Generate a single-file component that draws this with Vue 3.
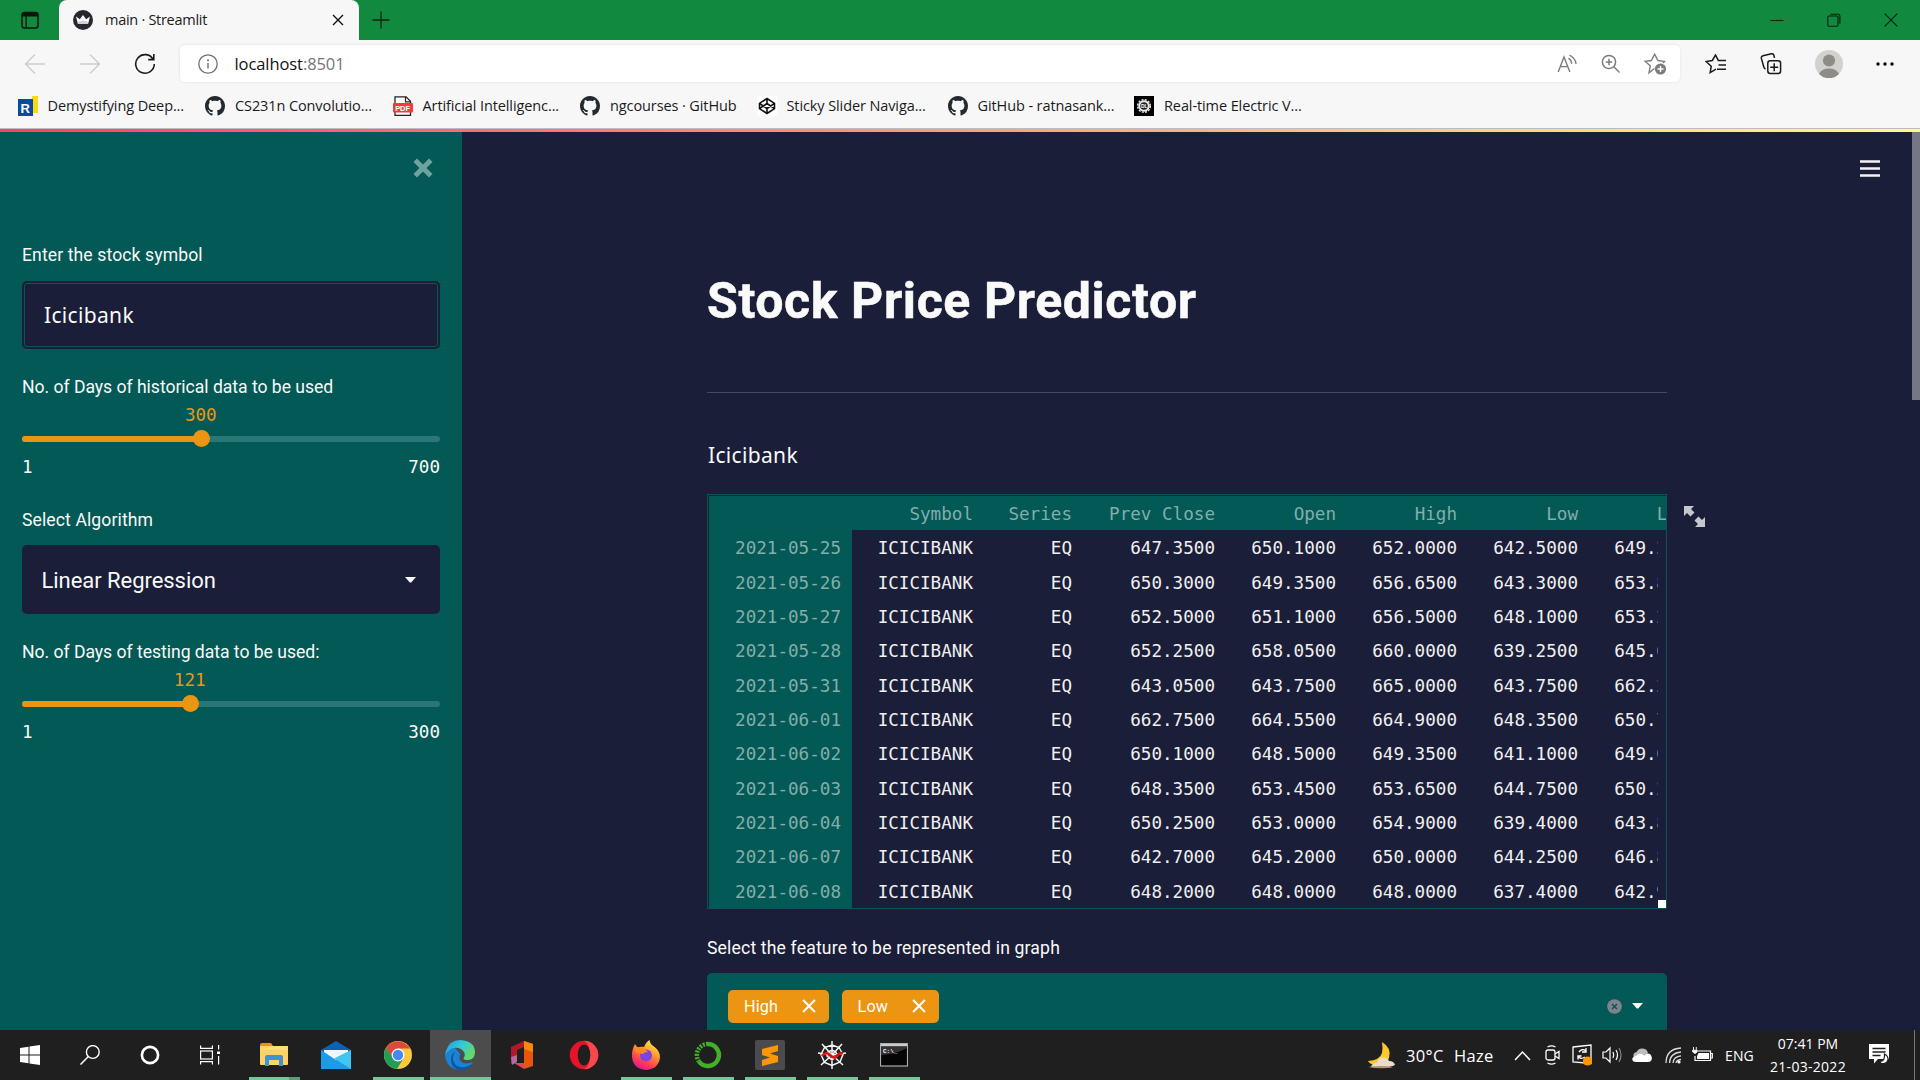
<script setup>
const bookmarks = [
  { icon: 'repo', label: 'Demystifying Deep...' },
  { icon: 'github', label: 'CS231n Convolutio...' },
  { icon: 'pdf', label: 'Artificial Intelligenc...' },
  { icon: 'github', label: 'ngcourses · GitHub', narrow: true },
  { icon: 'codepen', label: 'Sticky Slider Naviga...', wide: true },
  { icon: 'github', label: 'GitHub - ratnasank...' },
  { icon: 'dl', label: 'Real-time Electric V...' },
]

const columns = ['', 'Symbol', 'Series', 'Prev Close', 'Open', 'High', 'Low', 'Last']
const rows = [
  ['2021-05-25', 'ICICIBANK', 'EQ', '647.3500', '650.1000', '652.0000', '642.5000', '649.2000'],
  ['2021-05-26', 'ICICIBANK', 'EQ', '650.3000', '649.3500', '656.6500', '643.3000', '653.8000'],
  ['2021-05-27', 'ICICIBANK', 'EQ', '652.5000', '651.1000', '656.5000', '648.1000', '653.2000'],
  ['2021-05-28', 'ICICIBANK', 'EQ', '652.2500', '658.0500', '660.0000', '639.2500', '645.6000'],
  ['2021-05-31', 'ICICIBANK', 'EQ', '643.0500', '643.7500', '665.0000', '643.7500', '662.2000'],
  ['2021-06-01', 'ICICIBANK', 'EQ', '662.7500', '664.5500', '664.9000', '648.3500', '650.7000'],
  ['2021-06-02', 'ICICIBANK', 'EQ', '650.1000', '648.5000', '649.3500', '641.1000', '649.0000'],
  ['2021-06-03', 'ICICIBANK', 'EQ', '648.3500', '653.4500', '653.6500', '644.7500', '650.2000'],
  ['2021-06-04', 'ICICIBANK', 'EQ', '650.2500', '653.0000', '654.9000', '639.4000', '643.8000'],
  ['2021-06-07', 'ICICIBANK', 'EQ', '642.7000', '645.2000', '650.0000', '644.2500', '646.8000'],
  ['2021-06-08', 'ICICIBANK', 'EQ', '648.2000', '648.0000', '648.0000', '637.4000', '642.9000'],
]

const history = { value: 300, min: 1, max: 700 }
const testing = { value: 121, min: 1, max: 300 }
const pct = (s) => ((s.value - s.min) / (s.max - s.min)) * 100 + '%'

const apps = [
  { id: 'explorer', open: true, stacked: true },
  { id: 'mail' },
  { id: 'chrome', open: true },
  { id: 'edge', open: true, active: true },
  { id: 'office' },
  { id: 'opera' },
  { id: 'firefox', open: true },
  { id: 'anaconda', open: true },
  { id: 'sublime', open: true },
  { id: 'spyder', open: true },
  { id: 'cmd', open: true },
]
</script>

<template>
  <div class="screen">
    <!-- browser tabs -->
    <header class="tabbar">
      <div class="tab-menu">
        <svg width="20" height="20" viewBox="0 0 20 20"><rect x="2" y="2.5" width="16" height="15.5" rx="2.5" fill="none" stroke="#07170d" stroke-width="1.5" /><path d="M2 6V4.500Q2 2.500 4.500 2.500H15.500Q18 2.500 18 4.500V6.500H2zM5.500 6h1.300v12H5.500z" fill="#07170d" /></svg>
      </div>
      <div class="tab">
        <svg class="fav" width="20" height="20" viewBox="0 0 20 20"><circle cx="10" cy="10" r="10" fill="#262730" /><path d="M3 6.500l3.800 2.800L10 5l3.200 4.300L17 6.500l-2 7.500H5z" fill="#fff" /><path d="M4.600 12l5.400-1.500 5.400 1.500-.5 2H5z" fill="#cfd0d6" /></svg>
        <span class="tab-title">main · Streamlit</span>
        <svg width="12" height="12" viewBox="0 0 12 12"><path d="M1 1l10 10M11 1L1 11" stroke="#111" stroke-width="1.400" /></svg>
      </div>
      <svg class="plus" width="18" height="18" viewBox="0 0 18 18"><path d="M9 .5v17M.5 9h17" stroke="#06250f" stroke-width="1.300" /></svg>
      <div class="win">
        <svg width="14" height="14" viewBox="0 0 14 14"><path d="M.5 7.500h13" stroke="#04200d" stroke-width="1.100" /></svg>
        <svg width="14" height="14" viewBox="0 0 14 14" fill="none" stroke="#04200d" stroke-width="1.100"><rect x=".8" y="3" width="10.200" height="10.200" rx="1.200" /><path d="M3.500 1.200H11Q12.900 1.200 12.900 3v7.500" /></svg>
        <svg width="14" height="14" viewBox="0 0 14 14"><path d="M.7.7l12.600 12.600M13.300.7L.7 13.300" stroke="#04200d" stroke-width="1.100" /></svg>
      </div>
    </header>

    <!-- toolbar -->
    <div class="toolbar">
      <svg class="nav" width="22" height="22" viewBox="0 0 22 22" fill="none" stroke="#cdcdcd" stroke-width="1.400"><path d="M21 11H1.500M11 1.500L1.500 11l9.500 9.500" /></svg>
      <svg class="nav" width="22" height="22" viewBox="0 0 22 22" fill="none" stroke="#cdcdcd" stroke-width="1.400"><path d="M1 11h19.500M11 1.500l9.500 9.500-9.500 9.500" /></svg>
      <svg class="nav" width="22" height="22" viewBox="0 0 22 22" fill="none" stroke="#1b1b1b" stroke-width="1.600"><path d="M19.200 6.500A9.300 9.300 0 1 0 20.300 11M19.800 1v5.600h-5.600" /></svg>
      <div class="address">
        <svg width="20" height="20" viewBox="0 0 20 20"><circle cx="10" cy="10" r="9.200" fill="none" stroke="#707070" stroke-width="1.300" /><path d="M10 9v5.500" stroke="#707070" stroke-width="1.400" /><circle cx="10" cy="6.300" r="1" fill="#707070" /></svg>
        <span class="url">localhost<i>:8501</i></span>
        <svg class="tool" width="21" height="20" viewBox="0 0 21 20" fill="none" stroke="#7c7c7c" stroke-width="1.400"><path d="M1.200 18L7 3l5.900 15M3.300 12.600h7.600M11.500 4.200q3 2 3.200 5.600M12.500 1.200q5.600 2.800 6.600 8.600" /></svg>
        <svg class="tool" width="20" height="20" viewBox="0 0 20 20" fill="none" stroke="#7c7c7c" stroke-width="1.500"><circle cx="8" cy="8" r="6.600" /><path d="M12.800 12.800l5.700 5.700M8 4.800v6.400M4.800 8h6.400" /></svg>
        <svg class="tool" width="23" height="22" viewBox="0 0 23 22" fill="none" stroke="#7c7c7c" stroke-width="1.400"><path d="M10.500 15.500L5 19.800l1.200-7L1 8.300l6.300-.8L10.700 1.200l3.200 6.300 6.600.9-1.500 1.600" /><circle cx="16.500" cy="16" r="5.600" fill="#7c7c7c" stroke="none" /><path d="M16.500 13v6M13.500 16h6" stroke="#fff" /></svg>
      </div>
      <svg class="fav-list" width="22" height="20" viewBox="0 0 22 20" fill="none" stroke="#1b1b1b" stroke-width="1.500"><path d="M11 15.200L5.200 18.600l1-6.400L1 7.500l6.300-1L10.500 1l2.800 5.400H21M13.500 11H21M12 15.200h9" /></svg>
      <svg class="collections" width="22" height="22" viewBox="0 0 22 22" fill="none" stroke="#1b1b1b" stroke-width="1.500"><rect x="7.800" y="7.800" width="12.800" height="12.800" rx="2.500" /><path d="M14.200 10.200v8M10.200 14.200h8M5.500 16Q4.200 15.500 3.800 14L1.300 5.200Q1 3.300 3 2.700l8.500-2Q13.300.6 13.800 2l.7 3" /></svg>
      <svg class="avatar" width="28" height="28" viewBox="0 0 28 28"><circle cx="14" cy="14" r="14" fill="#d3d1ce" /><circle cx="14" cy="10.500" r="6.100" fill="#8f8c88" /><path d="M4 24a10.500 8 0 0 1 20 0 14 14 0 0 1-20 0z" fill="#8f8c88" /></svg>
      <svg class="dots" width="18" height="4" viewBox="0 0 18 4"><circle cx="2" cy="2" r="1.700" /><circle cx="9" cy="2" r="1.700" /><circle cx="16" cy="2" r="1.700" /></svg>
    </div>

    <!-- bookmarks -->
    <div class="bookmarks">
      <div v-for="b in bookmarks" :key="b.label" class="bookmark" :class="{ narrow: b.narrow, wide: b.wide }">
        <svg v-if="b.icon === 'repo'" width="20" height="20" viewBox="0 0 20 20"><path d="M14 0h6v17h-6z" fill="#f7da16" /><path d="M0 3h15v17H0z" fill="#0a4a9e" /><text x="2.500" y="16.500" class="r-letter">R</text></svg>
        <svg v-else-if="b.icon === 'github'" width="20" height="20" viewBox="0 0 16 16"><path fill="#24292f" d="M8 0C3.580 0 0 3.580 0 8c0 3.540 2.290 6.530 5.470 7.590.4.070.55-.17.55-.38 0-.19-.01-.82-.01-1.490-2.010.37-2.530-.49-2.690-.94-.09-.23-.48-.94-.82-1.130-.28-.15-.68-.52-.01-.53.63-.01 1.080.58 1.230.82.72 1.210 1.870.87 2.330.66.070-.52.28-.87.51-1.070-1.780-.2-3.640-.89-3.640-3.950 0-.87.31-1.590.82-2.150-.08-.2-.36-1.020.08-2.120 0 0 .67-.21 2.200.82.64-.18 1.320-.27 2-.27.68 0 1.360.09 2 .27 1.530-1.040 2.200-.82 2.200-.82.44 1.100.16 1.920.08 2.120.51.56.82 1.270.82 2.150 0 3.070-1.870 3.750-3.650 3.950.29.25.54.73.54 1.480 0 1.070-.01 1.930-.01 2.200 0 .21.15.46.55.38A8.013 8.013 0 0 0 16 8c0-4.420-3.580-8-8-8z" /></svg>
        <svg v-else-if="b.icon === 'pdf'" width="20" height="20" viewBox="0 0 20 20"><path d="M2 .8h11l4.500 4.500v14H2z" fill="#fff" stroke="#222" stroke-width="1.300" /><path d="M12.500 1v4.800h5" fill="none" stroke="#222" stroke-width="1.200" /><rect x="0" y="7" width="20" height="9.500" rx="1" fill="#f23c3c" /><text x="2.200" y="14.600" class="pdf-letter">PDF</text></svg>
        <svg v-else-if="b.icon === 'codepen'" width="20" height="20" viewBox="0 0 20 20"><rect width="20" height="20" rx="2" fill="#fff" /><path d="M10 2.500l7.500 4.800v5.400L10 17.500l-7.500-4.800V7.300zM10 2.500v5M10 12.500v5M2.500 7.300L10 12.500l7.500-5.200M2.500 12.700L10 7.500l7.500 5.200" fill="none" stroke="#111" stroke-width="1.600" stroke-linejoin="round" /></svg>
        <svg v-else width="20" height="20" viewBox="0 0 20 20"><rect width="20" height="20" fill="#000" /><circle cx="10" cy="10" r="5.800" fill="#e8e8e8" /><circle cx="10" cy="10" r="6.300" fill="none" stroke="#e8e8e8" stroke-width="1.500" stroke-dasharray="2 1.300" /><circle cx="10" cy="10" r="3.800" fill="#222" /><text x="7" y="11.800" class="dl-letter">DL</text></svg>
        <span>{{ b.label }}</span>
      </div>
    </div>
    <div class="decoration"></div>

    <!-- page -->
    <div class="page">
      <aside class="sidebar">
        <svg class="close" width="20" height="20" viewBox="0 0 20 20"><path d="M2.200 2.200l15.600 15.600M17.800 2.200L2.200 17.800" stroke="#6ea29f" stroke-width="5" /></svg>
        <label class="lbl">Enter the stock symbol</label>
        <div class="input"><div class="input-in"><span class="big serif-i">Icicibank</span></div></div>
        <label class="lbl days">No. of Days of historical data to be used</label>
        <div class="slider">
          <div class="value"><span :style="{ left: pct(history) }">{{ history.value }}</span></div>
          <div class="track"><div class="fill" :style="{ width: pct(history) }"></div></div>
          <div class="ticks"><span>{{ history.min }}</span><span>{{ history.max }}</span></div>
        </div>
        <label class="lbl algo">Select Algorithm</label>
        <div class="select"><span class="big regression">Linear Regression</span>
          <svg width="11" height="6" viewBox="0 0 11 6"><path d="M0 0h11L6.200 5.500H4.800z" fill="#fafafa" /></svg>
        </div>
        <label class="lbl days">No. of Days of testing data to be used:</label>
        <div class="slider">
          <div class="value"><span :style="{ left: pct(testing) }">{{ testing.value }}</span></div>
          <div class="track"><div class="fill" :style="{ width: pct(testing) }"></div></div>
          <div class="ticks"><span>{{ testing.min }}</span><span>{{ testing.max }}</span></div>
        </div>
      </aside>

      <main class="main">
        <svg class="burger" width="20" height="18" viewBox="0 0 20 18"><path d="M0 1.500h20M0 8.500h20M0 15.500h20" stroke="#f2f2f4" stroke-width="2.600" /></svg>
        <div class="scroll-thumb"></div>
        <section class="content">
          <h1>Stock Price Predictor</h1>
          <hr />
          <p class="name big serif-i">Icicibank</p>
          <div class="frame">
            <div class="grid">
              <div class="row head"><span v-for="(c, i) in columns" :key="i" :class="'c' + i">{{ c }}</span></div>
              <div v-for="r in rows" :key="r[0]" class="row"><span v-for="(c, i) in r" :key="i" :class="'c' + i">{{ c }}</span></div>
              <i class="gutter"></i><i class="corner"></i>
            </div>
            <svg class="expand" width="21" height="21" viewBox="0 0 21 21" fill="#c6c6cd"><path d="M0 0h10L7 3l3.500 3.500-4 4L3 7l-3 3zM21 21H11l3-3-3.500-3.500 4-4L18 14l3-3z" /></svg>
          </div>
          <label class="lbl feature">Select the feature to be represented in graph</label>
          <div class="multi">
            <span v-for="t in ['High', 'Low']" :key="t" class="tag">{{ t }}
              <svg width="14" height="14" viewBox="0 0 13 13"><path d="M1 1l11 11M12 1L1 12" stroke="#fff" stroke-width="1.900" /></svg>
            </span>
            <svg class="clear" width="15" height="15" viewBox="0 0 15 15"><circle cx="7.500" cy="7.500" r="7.300" fill="#80838f" /><path d="M5 5l5 5M10 5l-5 5" stroke="#025955" stroke-width="1.500" /></svg>
            <svg width="11" height="6" viewBox="0 0 11 6"><path d="M0 0h11L6.200 5.500H4.800z" fill="#fafafa" /></svg>
          </div>
        </section>
      </main>
    </div>

    <!-- taskbar -->
    <footer class="taskbar">
      <div class="sys"><svg width="20" height="20" viewBox="0 0 20 20" fill="#fff"><path d="M0 3l8.500-1.300v7.800H0zM9.500 1.500L20 0v9.500H9.500zM0 10.500h8.500v7.800L0 17zM9.500 10.500H20V20L9.500 18.500z" /></svg></div>
      <div class="sys"><svg width="20" height="20" viewBox="0 0 20 20" fill="none" stroke="#fff" stroke-width="1.400"><circle cx="12.800" cy="7" r="6.400" /><path d="M8.300 11.600L.5 19.600" /></svg></div>
      <div class="sys"><svg width="20" height="20" viewBox="0 0 20 20"><circle cx="10" cy="10" r="8.100" fill="none" stroke="#fff" stroke-width="2.600" /></svg></div>
      <div class="sys"><svg width="20" height="20" viewBox="0 0 20 20" fill="none" stroke="#fff" stroke-width="1.200"><path d="M.6.500v2.800h11.800V.5M.6 19.500v-2.800h11.800v2.800M18.600 0v4.500M18.600 11v8.500" /><rect x=".6" y="6" width="11.800" height="8" /><path d="M17 6.500h3V9h-3z" fill="#fff" stroke="none" /></svg></div>

      <div v-for="a in apps" :key="a.id" class="app" :class="{ open: a.open, active: a.active, stacked: a.stacked }">
        <svg v-if="a.id === 'explorer'" width="30" height="30" viewBox="0 0 30 30"><path d="M1 5q0-2 2-2h9l2 3v3H1z" fill="#dd9a0b" /><rect x="1" y="6" width="28" height="19" rx="1" fill="#fdd367" /><path d="M1 10L14 6h15v4H1z" fill="#ffdc7b" /><path d="M6 26V17q0-2 2-2h14q2 0 2 2v9h-4v-6H10v6z" fill="#3f92d4" /></svg>
        <svg v-else-if="a.id === 'mail'" width="30" height="30" viewBox="0 0 30 30"><path d="M0 10L15 1l15 9v3H0z" fill="#0a62b5" /><path d="M3 10h24v10H3z" fill="#f5f5f7" /><path d="M0 10l15 10L30 10v19H0z" fill="#1c9be6" /><path d="M30 10v19L13 18.500z" fill="#41c6f4" /></svg>
        <svg v-else-if="a.id === 'chrome'" width="28" height="28" viewBox="0 0 28 28"><circle cx="14" cy="14" r="14" fill="#fcc93e" /><path d="M1.900 7A14 14 0 0 1 26.100 7.600L14 7.600 8.500 17z" fill="#dc4a3d" /><path d="M1.900 7A14 14 0 0 0 13 28l6-10-10-1z" fill="#1f9e58" /><circle cx="14" cy="14" r="6.400" fill="#fff" /><circle cx="14" cy="14" r="5.200" fill="#4688f4" /></svg>
        <svg v-else-if="a.id === 'edge'" width="30" height="30" viewBox="0 0 30 30">
          <defs><linearGradient id="eg" x1="0" x2="1" y1="0" y2=".5"><stop offset="0" stop-color="#1b9de2" /><stop offset=".55" stop-color="#35c9d6" /><stop offset="1" stop-color="#62da6c" /></linearGradient></defs>
          <path d="M1 10A15 15 0 0 0 9 28.700Q20 32 27.500 23.500 28 22 26 22.500 20 25 16 21.500 13 18 15.500 14L10 8z" fill="#1a83d4" />
          <path d="M1 11Q4 0 15.500 0 30 1 30 12.500q-.5 7.500-7 7.500-5 0-4.500-2 2.300-2.500.5-6Q15 7 9 8 3 9.500.5 15z" fill="url(#eg)" />
          <path d="M10 12Q5 20 12 26q7 3.500 15.500-2.500-5 7.500-13 6.500Q6 28 6 20q0-6 4-8z" fill="#0c57a5" />
        </svg>
        <svg v-else-if="a.id === 'office'" width="24" height="30" viewBox="0 0 24 30"><path d="M1 7L14 1v6l-7 3v12l-6 2z" fill="#b3172a" /><path d="M1 17l6-2v7l-5 3z" fill="#b06aa6" /><path d="M14 1l9 3v22l-9 3z" fill="#e8560b" /><path d="M14 1l9 3v8l-9-3z" fill="#f58a0a" /><path d="M4 23h10v6z" fill="#e8405c" /></svg>
        <svg v-else-if="a.id === 'opera'" width="30" height="30" viewBox="0 0 30 30"><circle cx="15" cy="15" r="14.300" fill="#e4142b" /><path d="M15 .7a14.300 14.300 0 0 1 0 28.600q6-3 6-14.300T15 .7z" fill="#f9474c" /><ellipse cx="15" cy="15" rx="6.300" ry="10.500" fill="#1f1f1f" /></svg>
        <svg v-else-if="a.id === 'firefox'" width="30" height="30" viewBox="0 0 30 30">
          <defs><linearGradient id="ff" x1=".8" x2=".3" y1="0" y2="1"><stop offset="0" stop-color="#fff14f" /><stop offset=".4" stop-color="#ff9a2e" /><stop offset=".75" stop-color="#ff3b55" /><stop offset="1" stop-color="#d8169a" /></linearGradient></defs>
          <path d="M4 4q1 2 3 3.500Q9 6.500 13 7q2-5 5.500-7 .5 4 4.500 6.500Q29 11 29 17q-1 12-14 13Q2 29 1 17 .5 10 4 4z" fill="url(#ff)" /><circle cx="15" cy="15.500" r="6" fill="#7a45e0" /><path d="M4 8q5-2 10 1l3 3q-4 0-5 2-3-1-7-1z" fill="#ff8b20" />
        </svg>
        <svg v-else-if="a.id === 'anaconda'" width="28" height="28" viewBox="0 0 28 28" fill="none"><path d="M14 3A11 11 0 1 1 5 20.500" stroke="#43b02a" stroke-width="4.500" /><path d="M14 3A11 11 0 0 0 5 20.500" stroke="#43b02a" stroke-width="4.500" stroke-dasharray="2 1.200" /></svg>
        <svg v-else-if="a.id === 'sublime'" width="30" height="30" viewBox="0 0 30 30"><rect width="30" height="30" rx="2" fill="#4b4b4b" /><path d="M7 9l16-4v6l-8 2.500 8 2.500v6L7 26v-6l8-2.500L7 15z" fill="#ff9800" /></svg>
        <svg v-else-if="a.id === 'spyder'" width="30" height="30" viewBox="0 0 30 30" fill="none"><path d="M15 15V1M15 15l10-11M15 15l14-2M15 15l11 10M15 15v14M15 15L4 25M15 15L1 13M15 15L5 4M15 5l7 2.500 4 7-3 7.500-8 3.500-7.500-3L4 14.500l3.500-7zM15 10l4 2 1 4-5 4-5-4 1-4z" stroke="#f5f5f5" stroke-width="1.500" /><path d="M5 16q4-5 8-1t6 2q2-4 7-4" stroke="#e01010" stroke-width="2.600" /></svg>
        <svg v-else width="28" height="24" viewBox="0 0 28 24"><rect x=".5" y=".5" width="27" height="22.500" fill="#050505" stroke="#a9adb1" stroke-width="1.200" /><path d="M1 1h26v2.500H1z" fill="#c9cdd0" /><path d="M1 12Q14 12 27 5V3.500H1z" fill="#333" /><text x="3" y="10" class="cmd-text">C:\_</text></svg>
      </div>

      <div class="tray">
        <svg class="moon" width="29" height="27" viewBox="0 0 29 27"><path d="M15 0q10 6 7 16-3 7-12 7-7 0-9-4 12-1 14-8 1-5 0-11z" fill="#fcc92a" /><path d="M4 25q1-4 6-4 1-6 6.500-5.500Q21 15.500 22 19q5 0 6 4-5 3-24 2z" fill="#e9dccb" /><path d="M1 25q14-2 25 .5-13 1.800-25-.5z" fill="#b98f6f" /></svg>
        <span class="temp">30°C</span><span class="haze">Haze</span>
        <svg class="chev" width="17" height="11" viewBox="0 0 17 11" fill="none" stroke="#fff" stroke-width="1.500"><path d="M1 10l7.500-8L16 10" /></svg>
        <svg class="meet" width="16" height="20" viewBox="0 0 16 20" fill="none" stroke="#fff" stroke-width="1.300"><rect x="1" y="5" width="9" height="10" rx="2" /><path d="M10 9l4-2.500v7L10 11M2.500 2q4-2.200 8 0M2.500 18q4 2.200 8 0" /></svg>
        <svg class="upd" width="22" height="22" viewBox="0 0 22 22" fill="none" stroke="#fff" stroke-width="1.300"><path d="M1 3l18-2v18.500L1 18zM14 7Q10 4 7 8M14 4v4h-4M6 12q2 4 7 1M6 15.500V12h3.500" /><circle cx="15.500" cy="17" r="4.600" fill="#ff9500" stroke="none" /></svg>
        <svg class="spk" width="20" height="18" viewBox="0 0 20 18" fill="none" stroke="#fff" stroke-width="1.200"><path d="M1 6h3l4-4v14l-4-4H1zM11 6q1.500 3 0 6M14 4q3 5 0 10" /><path d="M17 2q4 7 0 14" stroke="#888" /></svg>
        <svg class="cloud" width="20" height="14" viewBox="0 0 20 14"><path d="M2 10Q0 5 4.500 4 7 0 11 .6 15 1 16 5l-8 6z" fill="#bdbdbd" /><path d="M4 14Q0 14 .3 10.500 1 8 4 8q2-3 5.500-2l3 1.500Q15 4.500 18 6q2.500 2.500 1.700 5.500Q19 14 16 14z" fill="#fff" /></svg>
        <svg class="wifi" width="17" height="17" viewBox="0 0 17 17" fill="none" stroke="#ddd" stroke-width="1.300"><path d="M1 16Q1 2 16 1M4.500 16Q5 6 16 5M8 16q.5-6.500 8-7.200M11 16q.5-3 5-3.500" /><circle cx="14" cy="15" r="1.600" fill="#fff" stroke="none" /></svg>
        <svg class="bat" width="21" height="16" viewBox="0 0 21 16"><path d="M6 4h12.500v9.500H3V9M18.500 6.500h1.800v4.500h-1.800" fill="none" stroke="#fff" stroke-width="1.200" /><path d="M6.500 6H17v6H5V9z" fill="#fff" /><path d="M1.500 0v3M4.300 0v3M.6 3.300h4.600v1.500L3 6.600.6 4.800z" fill="#fff" stroke="#fff" stroke-width=".9" /></svg>
        <span class="eng">ENG</span>
        <div class="clock"><span>07:41 PM</span><span class="date">21-03-2022</span></div>
        <svg class="notif" width="21" height="22" viewBox="0 0 21 22"><path d="M0 0h20v15H9l-4 4.500V15H0z" fill="#fff" /><path d="M3.500 4.500h13M3.500 8h13M3.500 11.500h8" stroke="#1f1f1f" stroke-width="1.300" /><path d="M15.500 10q4 2 3.500 6-1.500 4.500-7 3.500l-1-2q5 0 4.500-7.500z" fill="#fff" stroke="#1f1f1f" stroke-width="1.200" /></svg>
        <i class="peek"></i>
      </div>
    </footer>
  </div>
</template>

<style>
body { margin: 0; overflow: hidden; }
</style>

<style scoped>
.screen { width: 1920px; height: 1080px; display: flex; flex-direction: column; overflow: hidden; background: #1b1e38; font-family: "Open Sans", "Noto Sans", sans-serif; }
svg { flex: none; display: block; }

.tabbar { height: 40px; flex: none; background: #11893e; display: flex; align-items: center; }
.tab-menu { width: 59px; display: flex; padding-left: 20px; box-sizing: border-box; }
.tab { width: 300px; height: 40px; box-sizing: border-box; background: #f7f7f7; border-radius: 8px 8px 0 0; display: flex; align-items: center; padding: 0 15px 0 14px; }
.tab-title { flex: 1; margin-left: 12px; padding-bottom: 2px; font-size: 14.5px; letter-spacing: -0.28px; color: #1b1b1b; }
.plus { margin-left: 12.5px; }
.win { margin-left: auto; margin-right: 22px; display: flex; gap: 43px; }

.toolbar { height: 47px; flex: none; background: #f7f7f7; display: flex; align-items: center; }
.nav { margin-left: 23.5px; margin-right: 10px; }
.nav:nth-child(2) { margin-left: 23.5px; }
.nav:nth-child(3) { margin-left: 23px; margin-right: 24px; }
.address { width: 1500px; height: 37px; background: #fff; border-radius: 5px; box-shadow: 0 0 3px rgba(0, 0, 0, .1); display: flex; align-items: center; padding-left: 17.5px; box-sizing: border-box; }
.url { flex: 1; margin-left: 17px; font-size: 16.5px; letter-spacing: -0.08px; color: #111; }
.url i { font-style: normal; color: #757575; }
.tool { margin-right: 23px; }
.tool:last-child { margin-right: 13.5px; }
.fav-list { margin-left: 24.5px; }
.collections { margin-left: 33px; }
.avatar { margin-left: 33px; }
.dots { margin-left: 33.500px; }

.bookmarks { height: 41px; flex: none; background: #f7f7f7; border-bottom: 1px solid #bcbcc2; display: flex; padding-left: 17.500px; }
.bookmark { width: 187.500px; height: 38px; display: flex; align-items: center; gap: 10px; font-size: 14.500px; letter-spacing: -0.1px; color: #1b1b1b; white-space: nowrap; }
.bookmark span { padding-bottom: 2px; }
.narrow { width: 176.500px; }
.wide { width: 191px; }
.bookmark:nth-child(6) { width: 186.500px; }
.r-letter { font: bold 13px "Liberation Sans", sans-serif; fill: #fff; }
.pdf-letter { font: bold 7.500px "Liberation Sans", sans-serif; fill: #fff; }
.dl-letter { font: bold 5px "Liberation Sans", sans-serif; fill: #fff; }

.decoration { height: 3px; flex: none; background: linear-gradient(90deg, #ff3f6c, #fffd80); }

.page { flex: 1; min-height: 0; display: flex; font-family: Roboto, "Noto Sans", sans-serif; color: #fafafa; }
.sidebar { width: 462px; box-sizing: border-box; background: #025955; padding: 26px 22px 0; }
.close { margin: 0 7px 63px auto; }
.lbl { display: block; font-size: 17.600px; line-height: 28px; height: 28px; letter-spacing: .1px; white-space: nowrap; }
.days { letter-spacing: -0.03px; margin-top: 24px; }
.algo { margin-top: 27px; }
.big { font-size: 22px; letter-spacing: -0.050px; }
.regression { padding-top: 2px; }
.serif-i { font-family: "Noto Sans", sans-serif; font-size: 21px; letter-spacing: .33px; }
.input { margin-top: 12px; height: 68px; box-sizing: border-box; border: 2px solid #1b1e38; border-radius: 5px; background: #1b1e38; display: flex; }
.input-in { flex: 1; border: 1px solid #025955; border-radius: 3px; display: flex; align-items: center; padding-left: 19px; }
.slider { height: 78px; }
.value { position: relative; height: 25px; }
.value span { position: absolute; transform: translateX(-50%); top: 3px; font: 17.600px/22px "DejaVu Sans Mono", monospace; color: #ec9513; }
.track { margin-top: 10px; height: 6px; border-radius: 3px; background: #2b7776; }
.fill { height: 6px; border-radius: 3px; background: #ec9513; position: relative; }
.fill::after { content: ""; position: absolute; right: -9px; top: -6px; width: 17px; height: 17px; border-radius: 50%; background: #ec9513; }
.ticks { margin-top: 14px; display: flex; justify-content: space-between; font: 17.600px/22px "DejaVu Sans Mono", monospace; }
.select { margin-top: 11px; height: 69px; background: #1b1e38; border-radius: 5px; display: flex; align-items: center; justify-content: space-between; padding: 0 24.500px 0 19.500px; box-sizing: border-box; }

.main { flex: 1; position: relative; }
.burger { position: absolute; right: 40px; top: 28px; }
.scroll-thumb { position: absolute; right: 0; top: 0; width: 8px; height: 268px; background: #767685; }
.content { width: 960px; margin-left: 245px; padding-top: 139px; }
h1 { margin: 0; height: 60px; font: bold 50px/61px Roboto, sans-serif; letter-spacing: .600px; -webkit-text-stroke: .5px #fafafa; }
hr { margin: 61px 0 0; border: 0; height: 1px; background: #4a4a5e; }
.name { margin: 47px 0 0 1px; line-height: 30px; }
.frame { margin-top: 24px; position: relative; }
.grid { position: relative; height: 415px; box-sizing: border-box; border: 1px solid #0b5357; padding: 1px 0 0 1px; overflow: hidden; font: 17.600px "DejaVu Sans Mono", monospace; color: #f0f0f0; }
.row { display: flex; width: 1020px; height: 34.350px; }
.row span { flex: none; box-sizing: border-box; width: 121px; padding: 2px 11px 0 0; display: flex; align-items: center; justify-content: flex-end; white-space: pre; }
.row .c0 { width: 143px; background: #025955; color: #84adab; }
.row .c1 { width: 132px; }
.row .c2 { width: 99px; }
.row .c3 { width: 143px; }
.head { height: 34px; background: #025955; color: #84adab; }
.row:nth-child(12) { height: 36px; padding-bottom: 2px; background: linear-gradient(90deg, #025955 143px, transparent 143px); }
.row:nth-child(12) span { height: 34.350px; }
.gutter { position: absolute; right: 0; top: 35px; bottom: 0; width: 8px; background: #1b1e38; }
.corner { position: absolute; right: 0; bottom: 0; width: 8px; height: 8px; background: #fff; }
.expand { position: absolute; left: 976.500px; top: 11.500px; }
.feature { margin-top: 25px; letter-spacing: .16px; }
.multi { margin-top: 11px; height: 68px; border-radius: 5px; background: #025955; display: flex; align-items: center; padding: 0 24px 2px 21px; gap: 13px; box-sizing: border-box; }
.tag { height: 33px; box-sizing: border-box; background: #ec9513; border-radius: 5px; padding: 0 12.500px 0 16px; display: flex; align-items: center; gap: 24px; font-size: 16.200px; letter-spacing: .15px; color: #fff; }
.clear { margin-left: auto; margin-right: -3px; }

.taskbar { height: 50px; flex: none; background: #1f1f1f; display: flex; color: #fff; position: relative; }
.sys { width: 60px; display: flex; align-items: center; justify-content: center; }
.sys:nth-child(4) { margin-right: 3px; }
.app { width: 62px; display: flex; align-items: center; justify-content: center; position: relative; }
.active { background: linear-gradient(90deg, transparent 1px, #4c4c4c 1px); }
.open::after { content: ""; position: absolute; left: 6px; right: 5px; bottom: 0; height: 3px; background: #76c699; }
.active::after { left: 1px; right: 0; }
.stacked::after { background: linear-gradient(90deg, #76c699 79%, #5c9c78 79%); }
.cmd-text { font: bold 6px "Liberation Mono", monospace; fill: #fff; }
.tray { margin-left: auto; display: flex; align-items: center; font-size: 14px; white-space: nowrap; }
.temp, .haze { font-size: 16.500px; letter-spacing: .35px; width: 48px; padding-top: 1px; }
.haze { width: 60px; }
.moon { margin-right: 10px; }
.chev { margin-right: 14px; }
.meet { margin-right: 11px; }
.upd { margin-right: 8px; }
.spk { margin-right: 10px; }
.cloud { margin-right: 13px; }
.wifi { margin-right: 10px; }
.bat { margin-right: 12px; }
.eng { width: 45px; letter-spacing: .15px; }
.clock { width: 76px; display: flex; flex-direction: column; align-items: center; line-height: 23px; }
.date { letter-spacing: .29px; }
.notif { margin-left: 23px; margin-right: 24px; }
.peek { width: 1px; height: 50px; background: #777; margin-right: 5px; }
</style>
